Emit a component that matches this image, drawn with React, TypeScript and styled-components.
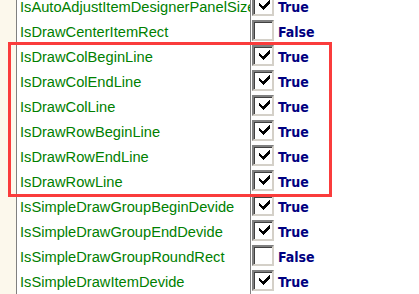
import React from 'react'
import styled, { createGlobalStyle } from 'styled-components'

type Prop = { name: string; value: boolean }

const props: Prop[] = [
  { name: 'IsAutoAdjustItemDesignerPanelSize', value: true },
  { name: 'IsDrawCenterItemRect', value: false },
  { name: 'IsDrawColBeginLine', value: true },
  { name: 'IsDrawColEndLine', value: true },
  { name: 'IsDrawColLine', value: true },
  { name: 'IsDrawRowBeginLine', value: true },
  { name: 'IsDrawRowEndLine', value: true },
  { name: 'IsDrawRowLine', value: true },
  { name: 'IsSimpleDrawGroupBeginDevide', value: true },
  { name: 'IsSimpleDrawGroupEndDevide', value: true },
  { name: 'IsSimpleDrawGroupRoundRect', value: false },
  { name: 'IsSimpleDrawItemDevide', value: true }
]

const GlobalStyle = createGlobalStyle`
  html, body {
    margin: 0;
    padding: 0;
    background: #ffffff;
    overflow: hidden;
  }
`

export default function App() {
  return (
    <>
      <GlobalStyle />
      <Grid>
        <Rows>
          {props.map(p => (
            <Row key={p.name}>
              <Margin />
              <NameCell>{p.name}</NameCell>
              <ValueCell>
                <CheckBox>
                  {p.value && (
                    <svg width="11" height="11" viewBox="0 0 11 11" shapeRendering="crispEdges">
                      <path d="M0 4 L4 8 L11 0 L11 4 L4 11 L0 7 Z" fill="#000" />
                    </svg>
                  )}
                </CheckBox>
                <Value>{p.value ? 'True' : 'False'}</Value>
              </ValueCell>
            </Row>
          ))}
        </Rows>
        <Highlight />
      </Grid>
    </>
  )
}

const Grid = styled.div`
  position: relative;
  width: 419px;
  height: 294px;
  overflow: hidden;
  background: #ffffff;
`

const Rows = styled.div`
  display: flex;
  flex-direction: column;
  margin-top: -5px;
`

const Row = styled.div`
  display: flex;
  height: 25px;
  align-items: stretch;
`

const Margin = styled.div`
  width: 16px;
  flex: none;
  background: #fcf8ec;
  border-right: 1px solid #808080;
`

const NameCell = styled.div`
  width: 230px;
  flex: none;
  padding: 0 0 1px 3px;
  overflow: hidden;
  white-space: nowrap;
  display: flex;
  align-items: center;
  font-family: 'Liberation Sans', Arial, sans-serif;
  font-size: 14.67px;
  color: #008000;
  border-right: 1px solid #808080;
`

const ValueCell = styled.div`
  flex: 1;
  display: flex;
  align-items: flex-start;
  padding-left: 1px;
`

const CheckBox = styled.div`
  box-sizing: border-box;
  width: 22px;
  height: 21px;
  background: #ffffff;
  border-top: 2px solid #808080;
  border-left: 2px solid #808080;
  border-right: 2px solid #d4d0c8;
  border-bottom: 2px solid #d4d0c8;
  box-shadow: inset 1px 1px 0 #404040;
  display: flex;
  align-items: center;
  justify-content: center;
  padding: 0 0 2px 3px;
`

const Value = styled.span`
  margin-left: 4px;
  line-height: 24px;
  font-family: 'DejaVu Sans Condensed', 'DejaVu Sans', sans-serif;
  font-weight: bold;
  font-size: 14px;
  color: #000080;
`

const Highlight = styled.div`
  position: absolute;
  left: 8px;
  top: 42px;
  width: 318px;
  height: 149px;
  border: 3px solid #fa3c3c;
  pointer-events: none;
`
